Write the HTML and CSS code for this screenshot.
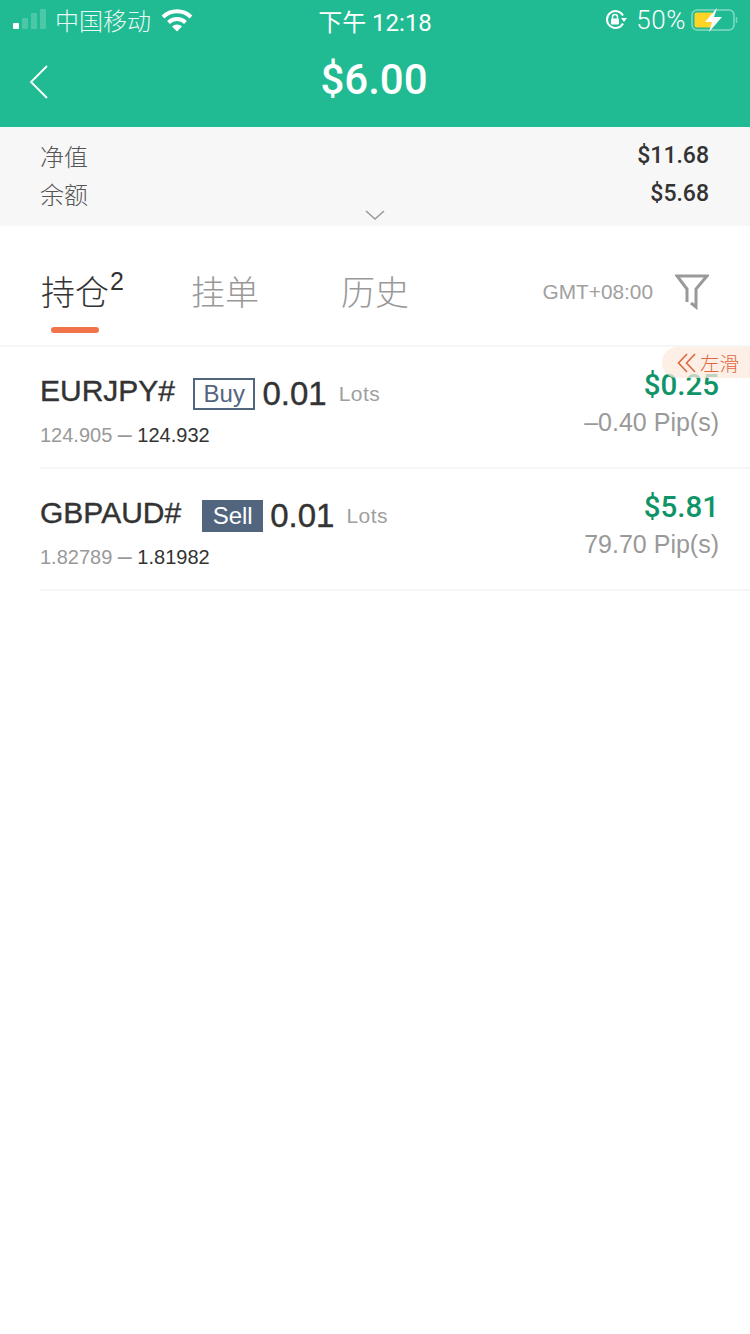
FILE: index.html
```html
<!DOCTYPE html>
<html lang="zh">
<head>
    <meta charset="UTF-8" />
    <title>$6.00</title>
    <link rel="stylesheet" href="styles.css">
</head>
<body>
<div class="page">
    <header class="top">
        <div class="status">
            <div class="status-left">
                <svg class="signal" width="34" height="22" viewBox="0 0 34 22">
                    <rect x="0" y="14" width="6" height="6" rx="1" fill="#fff"/>
                    <rect x="9" y="9" width="6" height="11" rx="1" fill="#fff" opacity=".2"/>
                    <rect x="18" y="4" width="6" height="16" rx="1" fill="#fff" opacity=".2"/>
                    <rect x="27" y="0" width="6" height="20" rx="1" fill="#fff" opacity=".2"/>
                </svg>
                <span class="carrier">中国移动</span>
                <svg class="wifi" width="32" height="24" viewBox="0 0 32 24">
                    <path d="M2 9 A20 20 0 0 1 30 9" fill="none" stroke="#fff" stroke-width="4"/>
                    <path d="M7.500 14.500 A12 12 0 0 1 24.500 14.500" fill="none" stroke="#fff" stroke-width="4"/>
                    <path d="M11 18.500 A7 7 0 0 1 21 18.500 L16 23.500 Z" fill="#fff"/>
                </svg>
            </div>
            <span class="clock">下午 12:18</span>
            <div class="status-right">
                <svg class="lock" width="22" height="22" viewBox="0 0 22 22">
                    <path d="M18 14.500 A8.500 8.500 0 1 1 18 6.500" fill="none" stroke="#fff" stroke-width="2"/>
                    <path d="M16 9 L22 9 L19 13 Z" fill="#fff"/>
                    <rect x="6" y="9.500" width="8" height="6" rx="1" fill="#fff"/>
                    <path d="M7.500 10 V8 A2.500 2.500 0 0 1 12.500 8 V10" fill="none" stroke="#fff" stroke-width="1.400"/>
                </svg>
                <span class="percent">50%</span>
                <svg class="battery" width="48" height="24" viewBox="0 0 48 24">
                    <rect x="1" y="2" width="42" height="20" rx="5" fill="none" stroke="#fff" stroke-opacity=".45" stroke-width="1.500"/>
                    <rect x="3.500" y="4.500" width="19" height="15" rx="2" fill="#ffd426"/>
                    <path d="M45.500 9 V15" stroke="#fff" stroke-opacity=".4" stroke-width="1.500"/>
                    <path d="M26 0 L14 14 H21 L18 24 L31 9 H23 Z" fill="#fff"/>
                </svg>
            </div>
        </div>
        <div class="nav">
            <svg class="back" width="20" height="34" viewBox="0 0 20 34">
                <path d="M18 1 L2 17 L18 33" fill="none" stroke="#fff" stroke-width="1.800"/>
            </svg>
            <h1 class="nav-title">$6.00</h1>
        </div>
    </header>

    <section class="summary">
        <div class="summary-row"><span class="summary-label">净值</span><span class="summary-value">$11.68</span></div>
        <div class="summary-row"><span class="summary-label">余额</span><span class="summary-value">$5.68</span></div>
        <svg class="chevron" width="20" height="10" viewBox="0 0 20 10">
            <path d="M1 1 L10 9 L19 1" fill="none" stroke="#999" stroke-width="1.500"/>
        </svg>
    </section>

    <nav class="tabs">
        <div class="tab tab-active">持仓<sup class="tab-count">2</sup><i class="tab-line"></i></div>
        <div class="tab">挂单</div>
        <div class="tab">历史</div>
        <span class="timezone">GMT+08:00</span>
        <svg class="filter" width="34" height="36" viewBox="0 0 34 36">
            <path d="M12 28 V15 L2 2 H32 L21 15 V33 L16 29" fill="none" stroke="#999" stroke-width="3"/>
        </svg>
    </nav>

    <div class="list">
        <div class="order">
            <div class="order-left">
                <div class="order-head">
                    <span class="symbol">EURJPY#</span>
                    <span class="side side-buy">Buy</span>
                    <span class="lots">0.01</span>
                    <span class="lots-unit">Lots</span>
                </div>
                <div class="prices"><span class="price-open">124.905 <span class="price-dash">–</span> </span>124.932</div>
            </div>
            <div class="order-right">
                <div class="profit">$0.25</div>
                <div class="pips">–0.40 Pip(s)</div>
            </div>
        </div>

        <div class="order">
            <div class="order-left">
                <div class="order-head">
                    <span class="symbol">GBPAUD#</span>
                    <span class="side side-sell">Sell</span>
                    <span class="lots">0.01</span>
                    <span class="lots-unit">Lots</span>
                </div>
                <div class="prices"><span class="price-open">1.82789 <span class="price-dash">–</span> </span>1.81982</div>
            </div>
            <div class="order-right">
                <div class="profit">$5.81</div>
                <div class="pips">79.70 Pip(s)</div>
            </div>
        </div>

        <div class="hint">
            <svg class="hint-arrows" width="19" height="22" viewBox="0 0 19 22">
                <path d="M10 2 L1.500 11 L10 20 M18 2 L9.500 11 L18 20" fill="none" stroke="#e0673f" stroke-width="1.600"/>
            </svg>
            <span>左滑</span>
        </div>
    </div>
</div>
</body>
</html>
```

FILE: styles.css
```css
html, body {
    margin: 0;
    padding: 0;
    background: #fff;
}

body {
    font-family: "Liberation Sans", "Noto Sans CJK SC", sans-serif;
    color: #333;
}

.page {
    width: 750px;
    height: 1334px;
    overflow: hidden;
}

.top {
    height: 127px;
    background-color: #20bb92;
    color: #fff;
}

.status {
    height: 40px;
    padding: 0 11px 0 13px;
    display: grid;
    grid-template-columns: 1fr auto 1fr;
    align-items: center;
}

.status-left, .status-right {
    display: flex;
    align-items: center;
}

.status-right {
    justify-content: flex-end;
}

.carrier {
    margin: -2px 0 0 8px;
    font-size: 24px;
    font-weight: 300;
    opacity: .9;
}

.wifi {
    margin-left: 10px;
}

.clock {
    margin-left: -2px;
    font-size: 24px;
    font-family: "Roboto", "Noto Sans CJK SC", sans-serif;
}

.percent {
    margin: 0 5px 0 9px;
    font-size: 26px;
    font-family: "Roboto", sans-serif;
    font-weight: 300;
    letter-spacing: .6px;
}

.nav {
    height: 78px;
    padding-left: 29px;
    display: grid;
    grid-template-columns: 20px 1fr 51px;
    align-items: center;
}

.back {
    margin-top: 5px;
}

.nav-title {
    margin: 0;
    font-family: "Roboto", sans-serif;
    font-size: 42px;
    font-weight: 500;
    text-align: center;
}

.summary {
    height: 99px;
    padding: 9px 41px 0 40px;
    box-sizing: border-box;
    background-color: #f7f7f7;
    position: relative;
}

.summary-row {
    height: 38px;
    display: flex;
    justify-content: space-between;
    align-items: center;
}

.summary-label {
    font-size: 24px;
    font-weight: 300;
    color: #555;
}

.summary-value {
    font-family: "Roboto", sans-serif;
    font-size: 23px;
    font-weight: 500;
    color: #333;
}

.chevron {
    position: absolute;
    left: 365px;
    top: 83px;
}

.tabs {
    height: 121px;
    padding: 0 41px 0 41px;
    box-sizing: border-box;
    border-bottom: 2px solid #f6f6f6;
    display: flex;
    align-items: center;
}

.tab {
    width: 150px;
    font-size: 34px;
    font-weight: 300;
    color: #999;
    position: relative;
    line-height: 46px;
    margin-top: 14px;
}

.tab-active {
    color: #333;
}

.tab-count {
    font-size: 25px;
    font-weight: 400;
    line-height: 28px;
    position: absolute;
    top: -3px;
    left: 69px;
}

.tab-line {
    position: absolute;
    left: 10px;
    top: 57px;
    width: 48px;
    height: 6px;
    border-radius: 3px;
    background-color: #f0734a;
}

.timezone {
    margin: 13px 22px 0 auto;
    font-size: 20.800px;
    color: #a0a0a0;
}

.filter {
    margin-top: 13px;
}

.list {
    position: relative;
}

.hint {
    position: absolute;
    right: 0;
    top: 0;
    width: 88px;
    height: 31px;
    border-radius: 16px 0 0 16px;
    background-color: rgba(252, 232, 222, .75);
    color: #e0673f;
    font-size: 19.500px;
    font-weight: 300;
    padding-right: 11px;
    box-sizing: border-box;
    display: flex;
    align-items: center;
    justify-content: flex-end;
    gap: 4px;
}

.order {
    height: 122px;
    margin-left: 40px;
    padding-right: 31px;
    box-sizing: border-box;
    border-bottom: 2px solid #f6f6f6;
    display: flex;
    justify-content: space-between;
}

.order-head {
    height: 40px;
    margin-top: 27px;
    display: flex;
    align-items: center;
}

.symbol {
    margin-bottom: 6px;
    font-size: 30px;
    color: #333;
    -webkit-text-stroke: .4px #333;
}

.side {
    margin-left: 18px;
    height: 32px;
    padding: 0 8.500px;
    box-sizing: border-box;
    border: 2px solid #52657f;
    font-size: 24px;
    line-height: 28px;
    color: #52657f;
}

.side-sell {
    margin-left: 21px;
    background-color: #52657f;
    color: #fff;
}

.lots {
    margin-left: 7px;
    font-size: 33px;
    color: #333;
    -webkit-text-stroke: .4px #333;
}

.lots-unit {
    margin-left: 12px;
    font-size: 21px;
    letter-spacing: .5px;
    color: #a0a0a0;
}

.prices {
    margin-top: 10px;
    font-size: 20px;
    color: #333;
}

.price-open {
    color: #999;
}

.price-dash {
    font-size: 25px;
    line-height: 0;
    vertical-align: -1px;
}

.order-right {
    text-align: right;
}

.profit {
    margin-top: 21px;
    font-family: "Roboto", sans-serif;
    font-size: 29.500px;
    font-weight: 500;
    color: #0f9468;
}

.pips {
    margin-top: 6px;
    font-size: 25px;
    color: #999;
}
```
